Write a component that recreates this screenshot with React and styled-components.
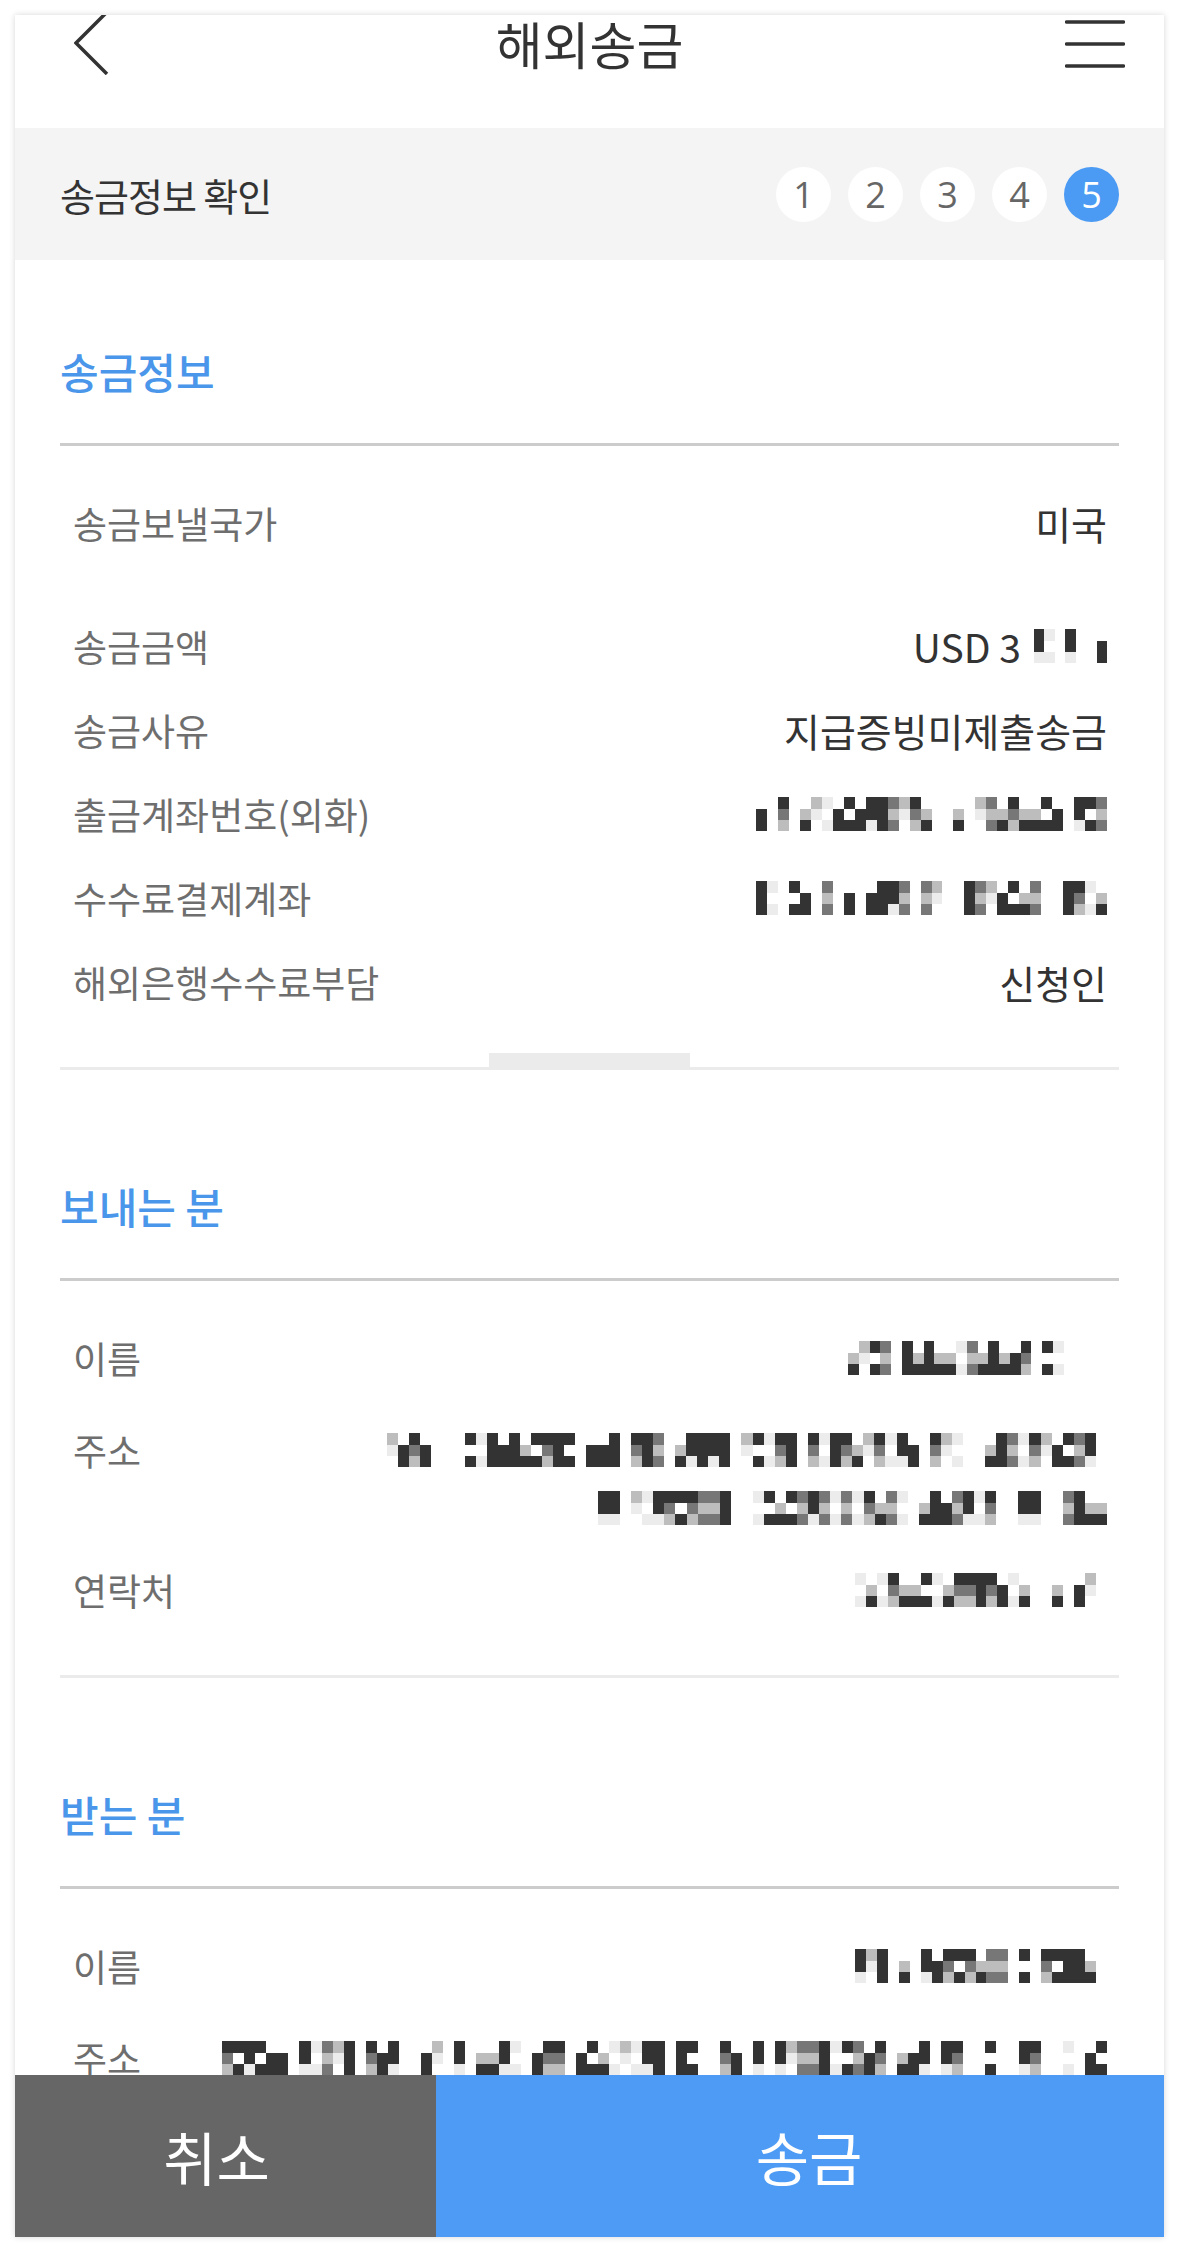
import React from 'react';
import styled, { createGlobalStyle } from 'styled-components';

const GlobalStyle = createGlobalStyle`
  body {
    margin: 0;
    background: #fff;
  }
`

const Card = styled.div`
  margin: 15px;
  width: 1149px;
  height: 2222px;
  display: flex;
  flex-direction: column;
  background: #fff;
  box-shadow: 0 0 6px rgba(0,0,0,0.16);
  font-family: "Noto Sans CJK KR", "Noto Sans", sans-serif;
`

const Header = styled.header`
  flex-shrink: 0;
  height: 113px;
  display: grid;
  grid-template-columns: 1fr auto 1fr;
  grid-template-rows: 56px;
  align-items: start;
  padding: 0 39px;
  box-sizing: border-box;
`

const Title = styled.h1`
  margin: 0;
  align-self: center;
  font-size: 51px;
  font-weight: 400;
  line-height: 56px;
  color: #333;
`

const IconButton = styled.div`
  display: flex;
  justify-self: ${p => p.$end ? 'end' : 'start'};
  margin-left: ${p => p.$end ? 0 : 20}px;
`

const StepBar = styled.div`
  flex-shrink: 0;
  height: 132px;
  background: #f4f4f4;
  display: flex;
  align-items: center;
  justify-content: space-between;
  padding: 0 45px;
`

const StepTitle = styled.div`
  font-size: 38px;
  color: #333;
  letter-spacing: -1px;
`

const Steps = styled.div`
  display: flex;
  gap: 17px;
`

const Step = styled.div`
  width: 55px;
  height: 55px;
  border-radius: 50%;
  display: flex;
  align-items: center;
  justify-content: center;
  background: ${p => p.$active ? '#4b9af3' : '#fff'};
  color: ${p => p.$active ? '#fff' : '#666'};
  font-family: "Open Sans", sans-serif;
  font-size: 36px;
`

const Content = styled.div`
  flex: 1;
  overflow: hidden;
  padding: 0 45px;
`

const Section = styled.section`
  padding-top: 87px;
`

const SectionTitle = styled.h2`
  margin: 0 0 48px;
  font-size: 42px;
  font-weight: 500;
  line-height: 48px;
  color: #4a96ea;
`

const HeavyRule = styled.div`
  height: 3px;
  background: #ccc;
`

const List = styled.div`
  padding: 35px 0 29px;
`

const Row = styled.div`
  display: flex;
  justify-content: space-between;
  align-items: flex-start;
  padding: ${p => p.$top || 23}px 12px 23px 13px;
  margin-bottom: ${p => p.$gap || 0}px;
  font-size: 37px;
  line-height: 38px;
`

const Label = styled.span`
  color: #6e6e6e;
  white-space: nowrap;
`

const Value = styled.span`
  color: #333;
  font-size: 39px;
  display: flex;
  flex-direction: column;
  align-items: flex-end;
  gap: 24px;
  padding-top: ${p => p.$mosaic ? 2 : 0}px;
  white-space: nowrap;
`

const Inline = styled.span`
  display: flex;
  align-items: center;
  gap: 2px;
`

const LightRule = styled.div`
  display: flex;
  flex-direction: column;
  margin-bottom: 25px;
`

const FoldTab = styled.div`
  align-self: center;
  width: 201px;
  height: 14px;
  background: ${p => p.$show ? '#ebebeb' : 'transparent'};
`

const RuleLine = styled.div`
  height: 3px;
  background: #ebebeb;
`

const MosaicGrid = styled.span`
  display: grid;
  grid-template-rows: 12px 11px 11px;
`

const Cell = styled.span`
  background: ${p => ['#ffffff', '#ececec', '#bdbdbd', '#777', '#333'][p.$tone]};
`

const BottomBar = styled.div`
  flex-shrink: 0;
  height: 162px;
  display: flex;
`

const BarButton = styled.button`
  border: 0;
  margin: 0;
  padding: ${p => p.$primary ? '0 0 0 18px' : '0 18px 0 0'};
  font-family: inherit;
  font-size: 58px;
  color: #fff;
  background: ${p => p.$primary ? '#4d9bf5' : '#666'};
  width: ${p => p.$primary ? 'auto' : '421px'};
  flex: ${p => p.$primary ? 1 : 'none'};
`

// pixelated stand-in for the blurred values, column by column
const COLUMN_KINDS = [
  [0, 0, 0], [4, 4, 4], [4, 4, 1], [0, 4, 4], [3, 2, 3],
  [4, 0, 4], [2, 1, 0], [4, 3, 2], [0, 2, 4], [1, 0, 1],
];

function Mosaic({ width, seed, light }) {
  const cols = Math.round(width / 11);
  let s = seed * 9301 + 49297;
  const rnd = () => {
    s = (s * 9301 + 49297) % 233280;
    return s / 233280;
  };
  const grid = [];
  for (let c = 0; c < cols; c++) {
    const r = rnd();
    let kind;
    if (light) kind = r < 0.55 ? 0 : r < 0.7 ? 9 : r < 0.8 ? 6 : 1 + Math.floor(rnd() * 4);
    else kind = r < 0.22 ? 0 : 1 + Math.floor(rnd() * 9);
    grid.push(COLUMN_KINDS[kind]);
  }
  const cells = [];
  for (let row = 0; row < 3; row++) {
    for (let c = 0; c < cols; c++) {
      cells.push(<Cell key={row + '-' + c} $tone={grid[c][row]} />);
    }
  }
  return (
    <MosaicGrid style={{ width, gridTemplateColumns: `repeat(${cols}, 1fr)` }}>
      {cells}
    </MosaicGrid>
  );
}

const BackIcon = () => (
  <svg width="35" height="60" viewBox="0 0 35 60">
    <polyline points="33,-3 2,28 33,59" fill="none" stroke="#333" strokeWidth="3.5" />
  </svg>
);

const MenuIcon = () => (
  <svg width="60" height="56" viewBox="0 0 60 56">
    <g stroke="#333" strokeWidth="3.5" strokeLinecap="round">
      <line x1="1.5" y1="7" x2="58.5" y2="7" />
      <line x1="1.5" y1="29" x2="58.5" y2="29" />
      <line x1="1.5" y1="51" x2="58.5" y2="51" />
    </g>
  </svg>
);

export default function App() {
  return (
    <>
      <GlobalStyle />
      <Card>
        <Header>
          <IconButton><BackIcon /></IconButton>
          <Title>해외송금</Title>
          <IconButton $end><MenuIcon /></IconButton>
        </Header>

        <StepBar>
          <StepTitle>송금정보 확인</StepTitle>
          <Steps>
            {[1, 2, 3, 4, 5].map(n => (
              <Step key={n} $active={n === 5}>{n}</Step>
            ))}
          </Steps>
        </StepBar>

        <Content>
          <Section>
            <SectionTitle>송금정보</SectionTitle>
            <HeavyRule />
            <List>
              <Row $gap={39}>
                <Label>송금보낼국가</Label>
                <Value>미국</Value>
              </Row>
              <Row>
                <Label>송금금액</Label>
                <Value>
                  <Inline>USD 3<Mosaic width={84} seed={3} light /></Inline>
                </Value>
              </Row>
              <Row>
                <Label>송금사유</Label>
                <Value>지급증빙미제출송금</Value>
              </Row>
              <Row>
                <Label>출금계좌번호(외화)</Label>
                <Value $mosaic><Mosaic width={351} seed={11} /></Value>
              </Row>
              <Row>
                <Label>수수료결제계좌</Label>
                <Value $mosaic><Mosaic width={351} seed={17} /></Value>
              </Row>
              <Row>
                <Label>해외은행수수료부담</Label>
                <Value>신청인</Value>
              </Row>
            </List>
            <LightRule>
              <FoldTab $show />
              <RuleLine />
            </LightRule>
          </Section>

          <Section>
            <SectionTitle>보내는 분</SectionTitle>
            <HeavyRule />
            <List>
              <Row>
                <Label>이름</Label>
                <Value $mosaic><Mosaic width={259} seed={23} /></Value>
              </Row>
              <Row $top={31}>
                <Label>주소</Label>
                <Value $mosaic>
                  <Mosaic width={720} seed={29} />
                  <Mosaic width={509} seed={31} />
                </Value>
              </Row>
              <Row>
                <Label>연락처</Label>
                <Value $mosaic><Mosaic width={252} seed={37} /></Value>
              </Row>
            </List>
            <LightRule>
              <FoldTab />
              <RuleLine />
            </LightRule>
          </Section>

          <Section>
            <SectionTitle>받는 분</SectionTitle>
            <HeavyRule />
            <List>
              <Row>
                <Label>이름</Label>
                <Value $mosaic><Mosaic width={252} seed={41} /></Value>
              </Row>
              <Row $top={31}>
                <Label>주소</Label>
                <Value $mosaic><Mosaic width={885} seed={43} /></Value>
              </Row>
            </List>
          </Section>
        </Content>

        <BottomBar>
          <BarButton>취소</BarButton>
          <BarButton $primary>송금</BarButton>
        </BottomBar>
      </Card>
    </>
  );
}
